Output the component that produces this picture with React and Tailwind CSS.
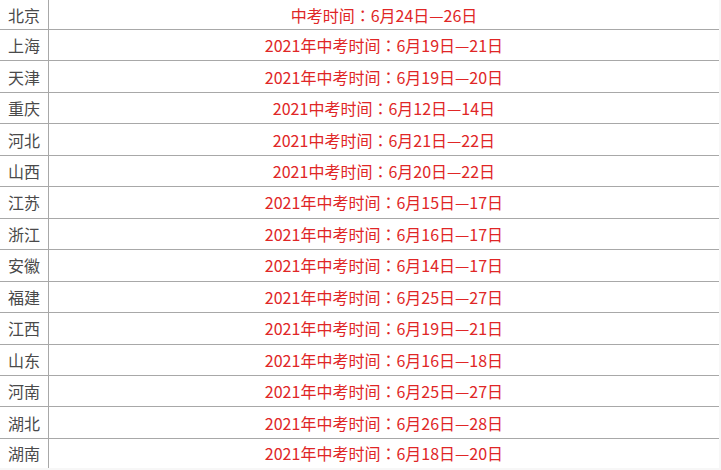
const rows = [
  ['北京', '中考时间', '6月24日—26日'],
  ['上海', '2021年中考时间', '6月19日—21日'],
  ['天津', '2021年中考时间', '6月19日—20日'],
  ['重庆', '2021中考时间', '6月12日—14日'],
  ['河北', '2021中考时间', '6月21日—22日'],
  ['山西', '2021中考时间', '6月20日—22日'],
  ['江苏', '2021年中考时间', '6月15日—17日'],
  ['浙江', '2021年中考时间', '6月16日—17日'],
  ['安徽', '2021年中考时间', '6月14日—17日'],
  ['福建', '2021年中考时间', '6月25日—27日'],
  ['江西', '2021年中考时间', '6月19日—21日'],
  ['山东', '2021年中考时间', '6月16日—18日'],
  ['河南', '2021年中考时间', '6月25日—27日'],
  ['湖北', '2021年中考时间', '6月26日—28日'],
  ['湖南', '2021年中考时间', '6月18日—20日'],
]

export default function App() {
  return (
    <div
      className="w-[721px] h-[470px] overflow-hidden bg-[#f7f7f7] text-[16px]"
      style={{ fontFamily: '"Noto Sans CJK SC", "Noto Sans", sans-serif' }}
    >
      <div className="w-[719px] bg-white">
        {rows.map(([province, label, dates], i) => {
          const first = i === 0
          const last = i === rows.length - 1
          return (
            <div
              key={province}
              className={`flex ${first ? 'h-[30px] border-b border-[#a8a8a8]' : last ? 'h-[29px]' : 'h-[31.46px] border-b border-[#a8a8a8]'}`}
            >
              <div className="w-[49px] shrink-0 border-r border-[#a8a8a8] flex items-center justify-center text-[#4a4a4a]">
                {province}
              </div>
              <div className="flex-1 flex items-center justify-center text-[#e02626]">
                {label}
                <span className="font-['Noto_Sans_CJK_TC',sans-serif]">：</span>
                {dates}
              </div>
            </div>
          )
        })}
      </div>
    </div>
  )
}
